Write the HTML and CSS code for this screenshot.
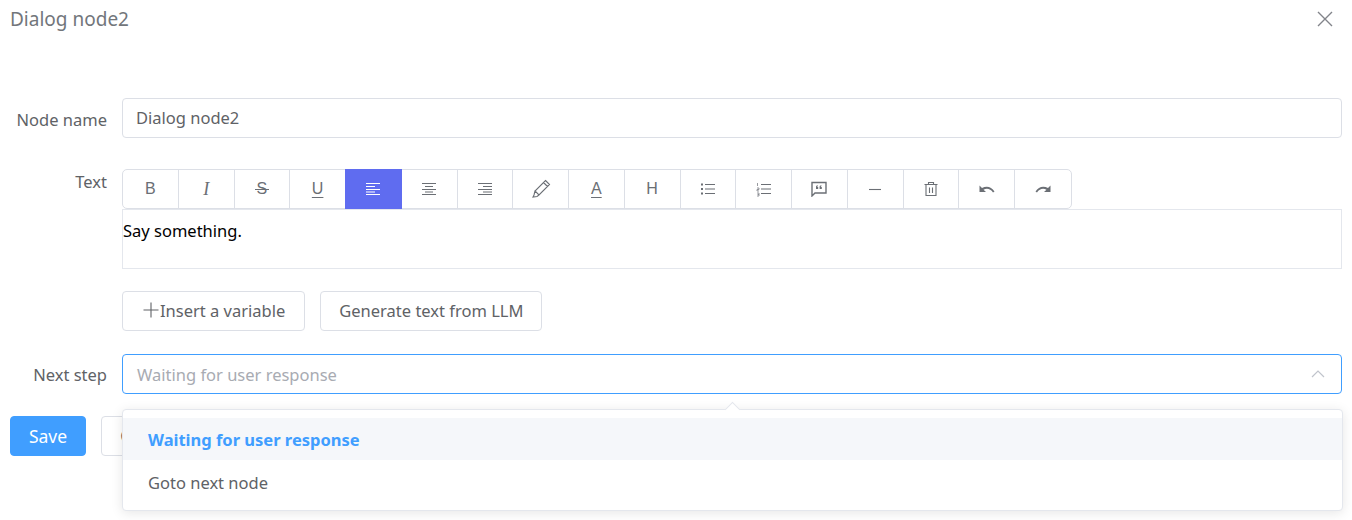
FILE: index.html
```html
<!DOCTYPE html>
<html lang="en">

<head>
    <meta charset="UTF-8">
    <meta name="viewport" content="width=device-width, initial-scale=1.0">
    <title>Dialog node2</title>
    <link rel="stylesheet" href="styles.css">
</head>

<body>
    <header class="dialog-header">
        <span class="dialog-title">Dialog node2</span>
        <svg class="close-icon" width="18" height="18" viewBox="0 0 18 18">
            <path d="M2 2 L16 16 M16 2 L2 16" />
        </svg>
    </header>

    <form class="node-form">
        <div class="form-row">
            <label class="form-label">Node name</label>
            <div class="form-control">
                <div class="text-input">Dialog node2</div>
            </div>
        </div>

        <div class="form-row">
            <label class="form-label label-text">Text</label>
            <div class="form-control">
                <div class="toolbar">
                    <div class="tool"><span class="glyph">B</span></div>
                    <div class="tool"><span class="glyph glyph-italic">I</span></div>
                    <div class="tool"><span class="glyph glyph-strike">S</span></div>
                    <div class="tool"><span class="glyph glyph-under">U</span></div>
                    <div class="tool tool-active">
                        <svg class="icon" width="16" height="16" viewBox="0 0 16 16">
                            <path d="M1 2.5H15M1 5.5H10M1 8.5H15M1 11H10M1 13.5H15" />
                        </svg>
                    </div>
                    <div class="tool">
                        <svg class="icon" width="16" height="16" viewBox="0 0 16 16">
                            <path d="M1 2.5H15M4 5.5H12M1 8.5H15M4 11H12M1 13.5H15" />
                        </svg>
                    </div>
                    <div class="tool">
                        <svg class="icon" width="16" height="16" viewBox="0 0 16 16">
                            <path d="M1 2.5H15M6 5.5H15M1 8.5H15M6 11H15M1 13.5H15" />
                        </svg>
                    </div>
                    <div class="tool">
                        <svg class="icon" width="20" height="20" viewBox="0 0 20 20">
                            <path d="M14.500 1.500 L18.500 5.500 L8 16 L4 12 Z M12.500 3.500 L16.500 7.500 M4 12 L3 16 L2 18 L6 17.500 L8 16" />
                        </svg>
                    </div>
                    <div class="tool"><span class="glyph glyph-under">A</span></div>
                    <div class="tool"><span class="glyph">H</span></div>
                    <div class="tool">
                        <svg class="icon" width="16" height="16" viewBox="0 0 16 16">
                            <path d="M5 3.500H15M5 8H15M5 12.500H15" />
                            <path class="icon-heavy" d="M1 3.500H3M1 8H3M1 12.500H3" />
                        </svg>
                    </div>
                    <div class="tool">
                        <svg class="icon" width="16" height="16" viewBox="0 0 16 16">
                            <path d="M5 3.500H15M5 8H15M5 12.500H15" />
                            <path class="icon-thin" d="M1.500 2V5M1 7H3V8.500H1V10H3M1 12H3V15H1M1.500 13.500H3" />
                        </svg>
                    </div>
                    <div class="tool">
                        <svg class="icon" width="16" height="16" viewBox="0 0 16 16">
                            <path class="icon-bold" d="M1 1.500H15V12H4L1 15Z" />
                            <path class="icon-fill" d="M5 8V6C5 5 5.500 4.500 6.800 4.300V5.200C6.300 5.400 6.200 5.700 6.200 6H7.200V8ZM8.600 8V6C8.600 5 9.100 4.500 10.400 4.300V5.200C9.900 5.400 9.800 5.700 9.800 6H10.800V8Z" />
                        </svg>
                    </div>
                    <div class="tool">
                        <svg class="icon" width="16" height="16" viewBox="0 0 16 16">
                            <path d="M2 8.500H14" />
                        </svg>
                    </div>
                    <div class="tool">
                        <svg class="icon" width="16" height="16" viewBox="0 0 16 16">
                            <path d="M1.500 3.500H14.500M3 3.500V14.500H13V3.500M5.500 3.500V1.500H10.500V3.500M6.500 6.500V12M9.500 6.500V12" />
                        </svg>
                    </div>
                    <div class="tool">
                        <svg class="icon" width="16" height="16" viewBox="0 0 16 16">
                            <path class="icon-fill" d="M0.500 4.500V11H7L4.500 8.800C7.500 6.800 11.500 7.500 14 11.500L15.500 10.500C12.500 5.500 7.500 4.500 3 7Z" />
                        </svg>
                    </div>
                    <div class="tool">
                        <svg class="icon" width="16" height="16" viewBox="0 0 16 16">
                            <path class="icon-fill" d="M15.500 4.500V11H9L11.500 8.800C8.500 6.800 4.500 7.500 2 11.500L0.500 10.500C3.500 5.500 8.500 4.500 13 7Z" />
                        </svg>
                    </div>
                </div>
                <div class="editor">Say something.</div>
                <div class="editor-actions">
                    <button type="button" class="btn btn-insert">
                        <svg class="plus-icon" width="16" height="16" viewBox="0 0 16 16">
                            <path d="M0.500 8H15.500M8 0.500V15.500" />
                        </svg>Insert a variable</button>
                    <button type="button" class="btn">Generate text from LLM</button>
                </div>
            </div>
        </div>

        <div class="form-row">
            <label class="form-label">Next step</label>
            <div class="form-control">
                <div class="select-input">
                    <span class="placeholder">Waiting for user response</span>
                    <svg class="caret" width="14" height="14" viewBox="0 0 14 14">
                        <path d="M1 10 L7 4 L13 10" />
                    </svg>
                </div>
            </div>
        </div>

        <div class="form-footer">
            <button type="button" class="btn btn-primary">Save</button>
            <button type="button" class="btn btn-cancel">Cancel</button>
        </div>
    </form>

    <div class="dropdown">
        <div class="dropdown-arrow"></div>
        <div class="dropdown-item dropdown-item-selected">Waiting for user response</div>
        <div class="dropdown-item dropdown-item-plain">Goto next node</div>
    </div>
</body>

</html>
```

FILE: styles.css
```css
html {
    font-family: "Noto Sans", "Open Sans", sans-serif;
    font-size: 16.5px;
}

body {
    margin: 0;
    padding: 0 10px;
    height: 520px;
    overflow: hidden;
    position: relative;
    background-color: #fff;
    color: #606266;
}

.dialog-header {
    display: flex;
    justify-content: space-between;
    align-items: center;
    height: 38px;
}

.dialog-title {
    font-size: 19px;
    color: #72767b;
}

.close-icon {
    margin-right: 8px;
}

.close-icon path {
    fill: none;
    stroke: #82848a;
    stroke-width: 1.4;
}

.node-form {
    padding-top: 60px;
    display: flex;
    flex-direction: column;
}

.form-row {
    display: flex;
    margin-bottom: 22px;
}

.form-label {
    width: 112px;
    height: 40px;
    flex: none;
    padding-right: 15px;
    box-sizing: border-box;
    text-align: right;
    line-height: 43px;
    font-size: 16.5px;
}

.label-text {
    line-height: 44px;
}

.form-control {
    flex: 1;
    min-width: 0;
}

.text-input,
.select-input {
    box-sizing: border-box;
    height: 40px;
    border: 1px solid #dcdfe6;
    border-radius: 4px;
    padding: 0 13px 2px;
    display: flex;
    align-items: center;
}

.select-input {
    justify-content: space-between;
    border-color: #409eff;
    padding: 0 16px 0 14px;
    margin-top: 1px;
}

.placeholder {
    color: #a8abb2;
}

.caret path {
    fill: none;
    stroke: #c0c4cc;
    stroke-width: 1.2;
}

.toolbar {
    display: flex;
    width: fit-content;
    margin-top: 9px;
    border: 1px solid #dcdfe6;
    border-radius: 5px;
}

.tool {
    box-sizing: border-box;
    width: 55.75px;
    height: 38px;
    display: flex;
    align-items: center;
    justify-content: center;
    border-right: 1px solid #dcdfe6;
    color: #6b6f75;
}

.tool:last-child {
    border-right: 0;
}

.tool-active {
    width: 56.75px;
    height: 40px;
    margin: -1px 0 -1px -1px;
    background-color: #5f6cf0;
    border-right: 0;
}

.glyph {
    font-family: "Liberation Sans", sans-serif;
    font-size: 16px;
    line-height: 18px;
}

.glyph-italic {
    font-family: "Liberation Serif", serif;
    font-style: italic;
    font-size: 18px;
}

.glyph-strike {
    padding: 0 2px;
    background: linear-gradient(#6b6f75, #6b6f75) center / 100% 1px no-repeat;
}

.glyph-under {
    text-decoration: underline;
    text-decoration-thickness: 1px;
    text-underline-offset: 3px;
}

.icon path {
    fill: none;
    stroke: #6b6f75;
    stroke-width: 1.1;
}

.icon .icon-heavy {
    stroke-width: 1.8;
}

.icon .icon-bold {
    stroke-width: 1.4;
}

.icon .icon-thin {
    stroke-width: 0.7;
}

.icon .icon-fill {
    fill: #6b6f75;
    stroke: none;
}

.tool-active .icon path {
    stroke: #fff;
}

.editor {
    box-sizing: border-box;
    height: 60px;
    border: 1px solid #e4e7ed;
    padding-top: 8px;
    line-height: 26px;
    color: #000;
}

.editor-actions {
    display: flex;
    gap: 15px;
    margin-top: 22px;
}

.btn {
    box-sizing: border-box;
    height: 40px;
    padding: 0 18px 2px;
    background-color: #fff;
    border: 1px solid #dcdfe6;
    border-radius: 4px;
    font-family: inherit;
    font-size: 16.5px;
    color: #606266;
}

.btn-insert {
    display: flex;
    align-items: center;
    padding: 0 19px 2px 20px;
}

.plus-icon {
    margin-right: 1px;
}

.plus-icon path {
    fill: none;
    stroke: #606266;
    stroke-width: 1.1;
}

.form-footer {
    display: flex;
    gap: 15px;
}

.btn-primary {
    width: 76px;
    padding: 0;
    background-color: #409eff;
    border-color: #409eff;
    font-size: 17.5px;
    color: #fff;
}

.btn-cancel {
    width: 90px;
}

.dropdown {
    position: absolute;
    left: 122px;
    top: 409px;
    width: 1221px;
    height: 102px;
    box-sizing: border-box;
    padding: 8px 0;
    background-color: #fff;
    border: 1px solid #e4e7ed;
    border-radius: 4px;
    box-shadow: 0 2px 12px rgba(0, 0, 0, 0.1);
}

.dropdown-arrow {
    position: absolute;
    top: -6px;
    left: 604px;
    width: 10px;
    height: 10px;
    background-color: #fff;
    border-top: 1px solid #e4e7ed;
    border-left: 1px solid #e4e7ed;
    transform: rotate(45deg);
}

.dropdown-item {
    box-sizing: border-box;
    height: 42px;
    padding: 0 25px;
    display: flex;
    align-items: center;
    color: #606266;
}

.dropdown-item-plain {
    padding-top: 2px;
}

.dropdown-item-selected {
    background-color: #f5f7fa;
    color: #409eff;
    font-weight: 700;
}
```
